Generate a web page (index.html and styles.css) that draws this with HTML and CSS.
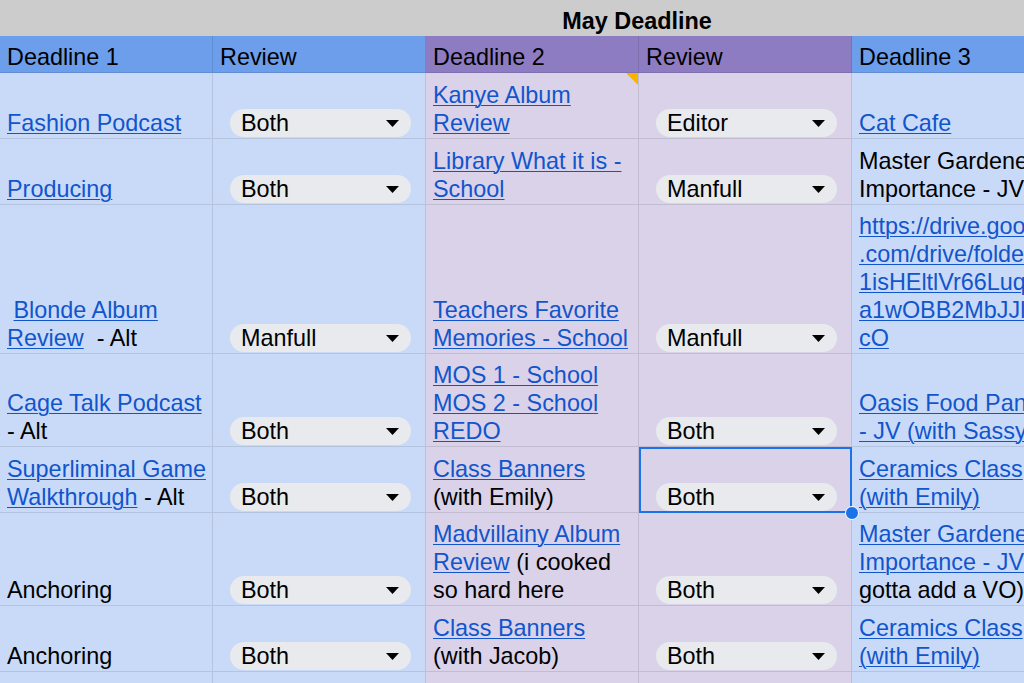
FILE: index.html
```html
<!DOCTYPE html>
<html lang="en">
<head>
<meta charset="utf-8">
<title>May Deadline</title>
<link rel="stylesheet" href="styles.css">
</head>
<body>
<div class="sheet">
  <div class="row band">
    <div class="cell gray"></div>
    <div class="cell gray"></div>
    <div class="cell gray span2 title">May Deadline</div>
    <div class="cell gray"></div>
  </div>

  <div class="row head">
    <div class="cell hblue"><div class="txt">Deadline 1</div></div>
    <div class="cell hblue"><div class="txt">Review</div></div>
    <div class="cell hpurple"><div class="txt">Deadline 2</div></div>
    <div class="cell hpurple"><div class="txt">Review</div></div>
    <div class="cell hblue"><div class="txt">Deadline 3</div></div>
  </div>

  <div class="row h2">
    <div class="cell blue"><div class="txt"><a href="#">Fashion Podcast</a></div></div>
    <div class="cell blue review"><div class="chip"><span>Both</span><svg class="arrow" viewBox="0 0 13 7" width="13" height="7"><polygon points="0,0 13,0 6.5,7"/></svg></div></div>
    <div class="cell purple comment"><div class="txt"><a href="#">Kanye Album Review</a></div></div>
    <div class="cell purple review"><div class="chip"><span>Editor</span><svg class="arrow" viewBox="0 0 13 7" width="13" height="7"><polygon points="0,0 13,0 6.5,7"/></svg></div></div>
    <div class="cell blue"><div class="txt"><a href="#">Cat Cafe</a></div></div>
  </div>

  <div class="row h2">
    <div class="cell blue"><div class="txt"><a href="#">Producing</a></div></div>
    <div class="cell blue review"><div class="chip"><span>Both</span><svg class="arrow" viewBox="0 0 13 7" width="13" height="7"><polygon points="0,0 13,0 6.5,7"/></svg></div></div>
    <div class="cell purple"><div class="txt"><a href="#">Library What it is - School</a></div></div>
    <div class="cell purple review"><div class="chip"><span>Manfull</span><svg class="arrow" viewBox="0 0 13 7" width="13" height="7"><polygon points="0,0 13,0 6.5,7"/></svg></div></div>
    <div class="cell blue"><div class="txt">Master Gardener Importance - JV</div></div>
  </div>

  <div class="row h5">
    <div class="cell blue"><div class="txt">&nbsp;<a href="#">Blonde Album Review</a>&nbsp; - Alt</div></div>
    <div class="cell blue review"><div class="chip"><span>Manfull</span><svg class="arrow" viewBox="0 0 13 7" width="13" height="7"><polygon points="0,0 13,0 6.5,7"/></svg></div></div>
    <div class="cell purple"><div class="txt"><a href="#">Teachers Favorite Memories - School</a></div></div>
    <div class="cell purple review"><div class="chip"><span>Manfull</span><svg class="arrow" viewBox="0 0 13 7" width="13" height="7"><polygon points="0,0 13,0 6.5,7"/></svg></div></div>
    <div class="cell blue"><div class="txt nowrap"><a href="#">https://drive.google<br>.com/drive/folders/<br>1isHEltlVr66Luqw<br>a1wOBB2MbJJl6<br>cO</a></div></div>
  </div>

  <div class="row h3">
    <div class="cell blue"><div class="txt"><a href="#">Cage Talk Podcast</a> - Alt</div></div>
    <div class="cell blue review"><div class="chip"><span>Both</span><svg class="arrow" viewBox="0 0 13 7" width="13" height="7"><polygon points="0,0 13,0 6.5,7"/></svg></div></div>
    <div class="cell purple"><div class="txt"><a href="#">MOS 1 - School</a><br><a href="#">MOS 2 - School</a><br><a href="#">REDO</a></div></div>
    <div class="cell purple review"><div class="chip"><span>Both</span><svg class="arrow" viewBox="0 0 13 7" width="13" height="7"><polygon points="0,0 13,0 6.5,7"/></svg></div></div>
    <div class="cell blue"><div class="txt"><a href="#">Oasis Food Pantry - JV (with Sassy)</a></div></div>
  </div>

  <div class="row h2">
    <div class="cell blue"><div class="txt"><a href="#">Superliminal Game Walkthrough</a> - Alt</div></div>
    <div class="cell blue review"><div class="chip"><span>Both</span><svg class="arrow" viewBox="0 0 13 7" width="13" height="7"><polygon points="0,0 13,0 6.5,7"/></svg></div></div>
    <div class="cell purple"><div class="txt"><a href="#">Class Banners</a><br>(with Emily)</div></div>
    <div class="cell purple review selected"><div class="chip"><span>Both</span><svg class="arrow" viewBox="0 0 13 7" width="13" height="7"><polygon points="0,0 13,0 6.5,7"/></svg></div></div>
    <div class="cell blue"><div class="txt"><a href="#">Ceramics Class (with Emily)</a></div></div>
  </div>

  <div class="row h3">
    <div class="cell blue"><div class="txt">Anchoring</div></div>
    <div class="cell blue review"><div class="chip"><span>Both</span><svg class="arrow" viewBox="0 0 13 7" width="13" height="7"><polygon points="0,0 13,0 6.5,7"/></svg></div></div>
    <div class="cell purple"><div class="txt"><a href="#">Madvillainy Album Review</a> (i cooked so hard here</div></div>
    <div class="cell purple review"><div class="chip"><span>Both</span><svg class="arrow" viewBox="0 0 13 7" width="13" height="7"><polygon points="0,0 13,0 6.5,7"/></svg></div></div>
    <div class="cell blue"><div class="txt"><a href="#">Master Gardener Importance - JV</a> (i gotta add a VO)</div></div>
  </div>

  <div class="row h2">
    <div class="cell blue"><div class="txt">Anchoring</div></div>
    <div class="cell blue review"><div class="chip"><span>Both</span><svg class="arrow" viewBox="0 0 13 7" width="13" height="7"><polygon points="0,0 13,0 6.5,7"/></svg></div></div>
    <div class="cell purple"><div class="txt"><a href="#">Class Banners</a><br>(with Jacob)</div></div>
    <div class="cell purple review"><div class="chip"><span>Both</span><svg class="arrow" viewBox="0 0 13 7" width="13" height="7"><polygon points="0,0 13,0 6.5,7"/></svg></div></div>
    <div class="cell blue"><div class="txt"><a href="#">Ceramics Class (with Emily)</a></div></div>
  </div>

  <div class="row h2">
    <div class="cell blue"></div>
    <div class="cell blue"></div>
    <div class="cell purple"></div>
    <div class="cell purple"></div>
    <div class="cell blue"></div>
  </div>
</div>
</body>
</html>
```

FILE: styles.css
```css
html, body {
  margin: 0;
  padding: 0;
  overflow: hidden;
  background: #c9daf8;
}

body {
  width: 1024px;
  height: 683px;
  font-family: "Liberation Sans", Arial, Helvetica, sans-serif;
  font-size: 23.4px;
  line-height: 28px;
  color: #000;
}

.sheet {
  width: 1065px;
  display: flex;
  flex-direction: column;
}

.row {
  display: grid;
  grid-template-columns: repeat(5, 213px);
}

.band { height: 36px; }
.head { height: 37px; }
.h2 { height: 66px; }
.h3 { height: 93px; }
.h5 { height: 149px; }

.cell {
  box-sizing: border-box;
  display: flex;
  flex-direction: column;
  justify-content: flex-end;
  padding: 0 3px 1px 7px;
  border-right: 1px solid rgba(0, 0, 0, 0.1);
  border-bottom: 1px solid rgba(0, 0, 0, 0.1);
  position: relative;
  min-width: 0;
}

.gray {
  background: #cccccc;
  border: none;
}

.span2 {
  grid-column: span 2;
}

.title {
  font-weight: bold;
  text-align: center;
  padding-left: 0;
  padding-right: 4px;
}

.hblue { background: #6d9eeb; }
.hpurple { background: #8e7cc3; }
.blue { background: #c9daf8; }
.purple { background: #d9d2e9; }

.nowrap {
  white-space: nowrap;
}

a {
  color: #1155cc;
  text-decoration: underline;
  text-decoration-thickness: 1px;
  text-underline-offset: 2px;
}

.review {
  padding-left: 6px;
  padding-right: 6px;
}

.chip {
  display: flex;
  align-items: center;
  justify-content: space-between;
  height: 28px;
  margin: 0 8px 0 11px;
  padding: 0 12px 0 11px;
  border-radius: 14px;
  background: #e8eaed;
}

.arrow {
  display: block;
  fill: #000;
  margin-top: 1px;
}

.comment::after {
  content: "";
  position: absolute;
  top: 0;
  right: 0;
  width: 0;
  height: 0;
  border-left: 12px solid transparent;
  border-top: 12px solid #f9b300;
}

.selected::after {
  content: "";
  position: absolute;
  left: 0;
  top: 0;
  right: -1px;
  bottom: -1px;
  border: 2px solid #1a73e8;
  z-index: 2;
}

.selected::before {
  content: "";
  position: absolute;
  right: -8px;
  bottom: -8px;
  width: 14px;
  height: 14px;
  box-sizing: border-box;
  border-radius: 50%;
  background: #1a73e8;
  border: 1px solid #ffffff;
  z-index: 3;
}
```
